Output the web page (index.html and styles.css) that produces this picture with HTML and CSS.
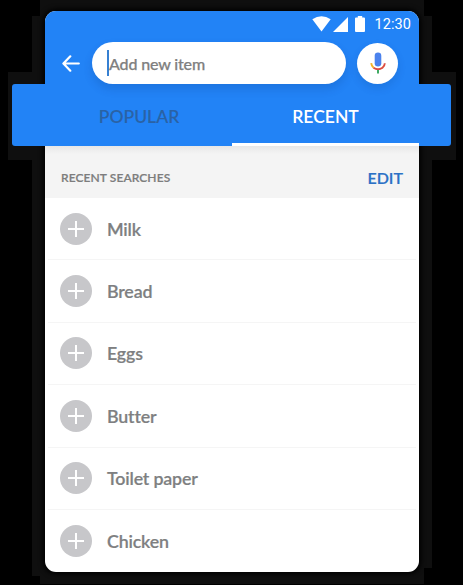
FILE: index.html
```html
<!DOCTYPE html>
<html lang="en">
<head>
<meta charset="utf-8">
<title>Add new item</title>
<link rel="stylesheet" href="styles.css">
</head>
<body>
<main class="phone">
  <header class="top">
    <div class="status">
      <svg class="wifi" width="19" height="16" viewBox="0 0 19 16"><path d="M0.3 3.2Q9.5-2.5 18.7 3.2L9.5 15.4Z"/></svg>
      <svg class="signal" width="15" height="15" viewBox="0 0 15 15"><path d="M15 0V15H0Z"/></svg>
      <svg class="battery" width="10" height="16" viewBox="0 0 10 16"><path d="M2.8 0H7.2V1.6H9Q10 1.6 10 2.6V15Q10 16 9 16H1Q0 16 0 15V2.6Q0 1.6 1 1.6H2.8Z"/></svg>
      <span class="clock">12:30</span>
    </div>
    <div class="search-row">
      <svg class="back" width="18" height="17" viewBox="0 0 18 17"><path d="M8.3 1.3L1.4 8.5L8.3 15.7M1.6 8.5H16.8"/></svg>
      <div class="search"><span class="caret"></span><span class="hint">Add new item</span></div>
      <div class="mic">
        <svg width="16" height="22" viewBox="0 0 16 22">
          <rect x="4.7" y="0.5" width="6.6" height="14" rx="3.3" fill="#4b82ed"/>
          <path d="M1.2 11.2Q1.5 14.2 3.6 15.8" stroke="#f5b526"/>
          <path d="M3.5 15.7Q8 18.9 12.5 15.7Q14.6 14.2 14.8 11.2" stroke="#dc4c3f"/>
          <path d="M8 18V21.6" stroke="#36a75c"/>
        </svg>
      </div>
    </div>
  </header>
  <nav class="tabs">
    <span class="tab">POPULAR</span>
    <span class="tab active">RECENT</span>
  </nav>
  <section class="list-head"><span class="label">RECENT SEARCHES</span><span class="edit">EDIT</span></section>
  <ul class="list">
    <li class="row"><span class="plus"></span><span>Milk</span></li>
    <li class="row"><span class="plus"></span><span>Bread</span></li>
    <li class="row"><span class="plus"></span><span>Eggs</span></li>
    <li class="row"><span class="plus"></span><span>Butter</span></li>
    <li class="row"><span class="plus"></span><span>Toilet paper</span></li>
    <li class="row"><span class="plus"></span><span>Chicken</span></li>
  </ul>
</main>
</body>
</html>
```
FILE: styles.css
```css
* { box-sizing: border-box; }
body {
  margin: 0;
  width: 463px;
  height: 585px;
  padding: 11px 44px 0 45px;
  background: #000;
  overflow: hidden;
  position: relative;
  font-family: Lato, "Liberation Sans", sans-serif;
}
/* faint halo behind the phone and the tab band */
body::before {
  content: "";
  position: absolute;
  inset: 0;
  background: #0f0f0f;
  clip-path: polygon(40px 0, 424px 0, 424px 16px, 432px 16px, 432px 72px, 456px 72px, 456px 152px, 456px 160px, 432px 160px, 432px 568px, 424px 568px, 424px 584px, 40px 584px, 40px 576px, 32px 576px, 32px 160px, 8px 160px, 8px 80px, 8px 72px, 32px 72px, 32px 16px, 40px 16px);
}
.phone {
  position: relative;
  width: 374px;
  height: 561px;
  border-radius: 11px;
  background: #fff;
  box-shadow: 0 0 5px 2px #000;
}
.top {
  height: 73px;
  background: #2283f6;
  border-radius: 11px 11px 0 0;
}
.status {
  height: 31px;
  padding: 5px 8px 0 0;
  display: flex;
  justify-content: flex-end;
  align-items: flex-start;
  color: #fff;
}
.status svg { fill: #fff; }
.signal { margin: 1px 0 0 2px; }
.battery { margin-left: 7px; }
.clock {
  margin: 1px 0 0 9px;
  font: 400 14.5px/16px Roboto, sans-serif;
  letter-spacing: .1px;
}
.search-row {
  display: flex;
  align-items: center;
  height: 42px;
  padding-left: 17px;
}
.back {
  fill: none;
  stroke: #fff;
  stroke-width: 2.2;
  stroke-linecap: round;
  stroke-linejoin: round;
}
.search {
  margin-left: 12px;
  width: 254px;
  height: 42px;
  border-radius: 21px;
  background: #fff;
  box-shadow: 0 5px 10px rgba(0, 40, 100, .16);
  display: flex;
  align-items: center;
  padding-left: 15px;
  position: relative;
  z-index: 2;
}
.caret { width: 2px; height: 26px; background: #3680d2; }
.hint {
  font-size: 16px;
  font-weight: 500;
  letter-spacing: -.15px;
  -webkit-text-stroke: .25px #808080;
  line-height: 20px;
  color: #808080;
  padding-top: 2px;
}
.mic {
  margin-left: 11px;
  width: 41px;
  height: 41px;
  border-radius: 50%;
  background: #fff;
  box-shadow: 0 4px 8px rgba(0, 40, 100, .14);
  display: flex;
  align-items: center;
  justify-content: center;
  position: relative;
  z-index: 2;
}
.mic path { fill: none; stroke-width: 1.9; }
.tabs {
  position: relative;
  height: 62px;
  margin: 0 -32px 0 -33px;
  padding: 0 32px 0 33px;
  display: flex;
  border-radius: 3px;
  background: #2283f6;
}
.tab {
  width: 50%;
  display: flex;
  align-items: center;
  justify-content: center;
  padding: 3px 0 0 1px;
  font-size: 17.5px;
  font-weight: 600;
  color: #2a62a5;
  border-bottom: 0 solid #fff;
}
.tab.active { color: #fff; border-bottom-width: 3px; padding: 6px 0 0; }
.list-head {
  height: 52px;
  padding: 10px 16px 0 16px;
  display: flex;
  align-items: center;
  justify-content: space-between;
  background: linear-gradient(#e7e7e7, #f4f4f4 8px);
}
.label { font-size: 12px; font-weight: 600; letter-spacing: .08px; color: #7d7d7d; -webkit-text-stroke: .2px #7d7d7d; }
.edit { font-size: 16px; font-weight: 600; color: #2b71c6; -webkit-text-stroke: .2px #2b71c6; }
.list { list-style: none; margin: 0; padding: 0; }
.row {
  height: 62.4px;
  margin: 0 3px;
  padding-left: 12px;
  display: flex;
  align-items: center;
  border-bottom: 1px solid #f5f5f5;
  font-size: 17.8px;
  font-weight: 600;
  letter-spacing: -.16px;
  -webkit-text-stroke: .2px #7e7f81;
  color: #7e7f81;
}
.row:last-child { border-bottom: 0; }
.plus {
  width: 32px;
  height: 32px;
  margin-right: 15px;
  border-radius: 50%;
  background:
    linear-gradient(#fff, #fff) center / 16px 2px no-repeat,
    linear-gradient(#fff, #fff) center / 2px 16px no-repeat,
    #c7c7ca;
}
```
